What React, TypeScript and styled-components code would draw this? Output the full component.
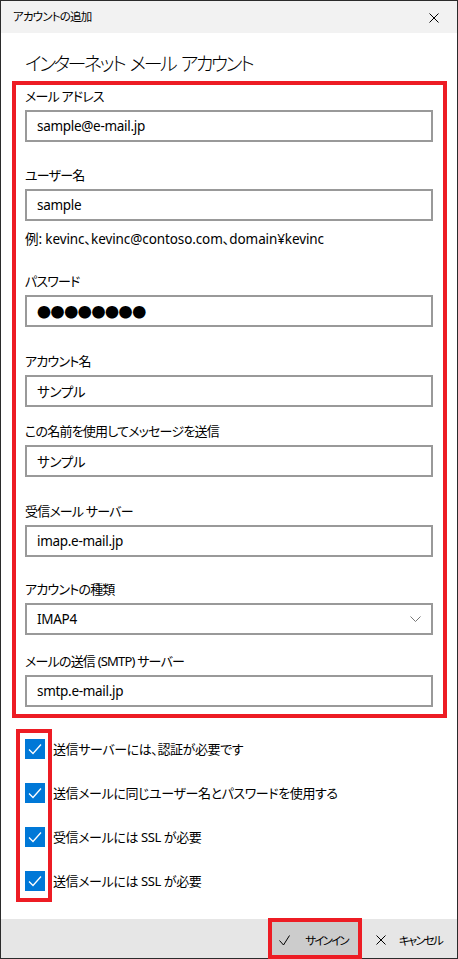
import React from "react";
import styled, { createGlobalStyle } from "styled-components";

const GlobalStyle = createGlobalStyle`
  html, body {
    margin: 0;
    padding: 0;
    background: #ffffff;
  }
  body {
    font-family: "Noto Sans", "Noto Sans CJK JP", sans-serif;
    font-feature-settings: "palt";
    color: #000000;
  }
  * {
    box-sizing: border-box;
  }
`;

const Window = styled.div`
  width: 458px;
  height: 959px;
  border: 1px solid #2b2b2b;
  background: #ffffff;
  display: flex;
  flex-direction: column;
`;

const TitleBar = styled.div`
  height: 32px;
  background: #f2f2f2;
  display: flex;
  align-items: center;
  justify-content: space-between;
  padding: 0 18px 0 12px;
`;

const TitleText = styled.span`
  font-size: 11.5px;
  line-height: 16px;
  letter-spacing: -0.8px;
`;

const CloseButton = styled.div`
  width: 10px;
  height: 10px;
  display: flex;
  margin-top: 1px;
`;

const Body = styled.div`
  flex: 1;
  padding: 0 10px 0 11px;
  display: flex;
  flex-direction: column;
`;

const Heading = styled.h1`
  margin: 17px 0 0 13px;
  font-size: 19px;
  line-height: 28px;
  font-weight: 300;
  letter-spacing: -2.5px;
  word-spacing: 3px;
`;

const FieldBox = styled.div`
  margin-top: 3px;
  border: 4px solid #ed1c24;
  padding: 1px 10px 7px 9px;
  display: flex;
  flex-direction: column;
`;

const Field = styled.div<{ $space: number }>`
  margin-top: ${(p) => p.$space}px;
  display: flex;
  flex-direction: column;
`;

const Label = styled.label`
  font-size: 13px;
  line-height: 20px;
  letter-spacing: -0.8px;
  margin-bottom: 4px;
`;

const TextBox = styled.div`
  height: 32px;
  border: 2px solid #999999;
  padding: 0 10px;
  display: flex;
  align-items: center;
  justify-content: space-between;
  font-size: 13.5px;
  letter-spacing: -0.3px;
`;

const Dots = styled.span`
  font-family: "Noto Sans CJK JP", sans-serif;
  font-size: 14px;
  letter-spacing: -0.4px;
`;

const Hint = styled.div`
  margin-top: 8px;
  font-size: 13.5px;
  line-height: 20px;
  letter-spacing: -0.1px;
`;

const CheckList = styled.div`
  position: relative;
  margin-top: 11px;
  padding: 10px 0 11px 13px;
  display: flex;
  flex-direction: column;
  gap: 24px;
`;

const Highlight = styled.div`
  position: absolute;
  left: 4px;
  top: 0;
  width: 36px;
  height: 100%;
  border: 4px solid #ed1c24;
  pointer-events: none;
`;

const CheckRow = styled.div`
  display: flex;
  align-items: center;
  gap: 8px;
  height: 20px;
`;

const CheckBox = styled.div`
  width: 20px;
  height: 20px;
  background: #0078d7;
  display: flex;
  flex-shrink: 0;
`;

const CheckText = styled.span`
  font-size: 13px;
  line-height: 20px;
  letter-spacing: -0.4px;
`;

const Footer = styled.div`
  height: 39px;
  background: #e6e6e6;
  display: flex;
  justify-content: flex-end;
  align-items: flex-end;
  padding-right: 4px;
  gap: 10px;
`;

const FooterButton = styled.div<{ $active?: boolean }>`
  position: relative;
  height: 36px;
  display: flex;
  align-items: center;
  gap: ${(p) => (p.$active ? 15 : 13)}px;
  padding: 0 11px 0 7px;
  background: ${(p) => (p.$active ? "#cccccc" : "transparent")};
  font-size: 11.5px;
  letter-spacing: -1.8px;
`;

const ButtonMark = styled.span`
  position: absolute;
  top: -4px;
  left: -4px;
  right: -3px;
  bottom: -1px;
  border: 4px solid #ed1c24;
`;

type FieldDef = {
  label: string;
  value?: string;
  space: number;
  kind?: "text" | "password" | "select";
};

const fields: FieldDef[] = [
  { label: "メール アドレス", value: "sample@e-mail.jp", space: 0 },
  { label: "ユーザー名", value: "sample", space: 23 },
  { label: "パスワード", space: 22, kind: "password" },
  { label: "アカウント名", value: "サンプル", space: 24 },
  { label: "この名前を使用してメッセージを送信", value: "サンプル", space: 14 },
  { label: "受信メール サーバー", value: "imap.e-mail.jp", space: 24 },
  { label: "アカウントの種類", value: "IMAP4", space: 22, kind: "select" },
  { label: "メールの送信 (SMTP) サーバー", value: "smtp.e-mail.jp", space: 16 },
];

const checks = [
  "送信サーバーには、認証が必要です",
  "送信メールに同じユーザー名とパスワードを使用する",
  "受信メールには SSL が必要",
  "送信メールには SSL が必要",
];

const Cross = () => (
  <svg width="10" height="10" viewBox="0 0 10 10">
    <path d="M0.5 0.5 L9.5 9.5 M9.5 0.5 L0.5 9.5" stroke="#000" strokeWidth="1" fill="none" />
  </svg>
);

const Chevron = () => (
  <svg width="11" height="6" viewBox="0 0 11 6">
    <path d="M0.5 0.5 L5.5 5.5 L10.5 0.5" stroke="#777" strokeWidth="1" fill="none" />
  </svg>
);

const Tick = () => (
  <svg width="20" height="20" viewBox="0 0 20 20">
    <path d="M4 10.5 L8 14.5 L16 5.5" stroke="#fff" strokeWidth="1.3" fill="none" />
  </svg>
);

const SignInTick = () => (
  <svg width="11" height="11" viewBox="0 0 11 11">
    <path d="M0.5 5.5 L4.5 10 L10.5 0.5" stroke="#000" strokeWidth="1" fill="none" />
  </svg>
);

export default function App() {
  return (
    <>
      <GlobalStyle />
      <Window>
        <TitleBar>
          <TitleText>アカウントの追加</TitleText>
          <CloseButton>
            <Cross />
          </CloseButton>
        </TitleBar>
        <Body>
          <Heading>インターネット メール アカウント</Heading>
          <FieldBox>
            {fields.map((f, i) => (
              <React.Fragment key={f.label}>
                <Field $space={f.space}>
                  <Label>{f.label}</Label>
                  <TextBox>
                    {f.kind === "password" ? (
                      <Dots>●●●●●●●●</Dots>
                    ) : (
                      <span>{f.value}</span>
                    )}
                    {f.kind === "select" && <Chevron />}
                  </TextBox>
                </Field>
                {i === 1 && (
                  <Hint>例: kevinc、kevinc@contoso.com、domain¥kevinc</Hint>
                )}
              </React.Fragment>
            ))}
          </FieldBox>
          <CheckList>
            <Highlight />
            {checks.map((c) => (
              <CheckRow key={c}>
                <CheckBox>
                  <Tick />
                </CheckBox>
                <CheckText>{c}</CheckText>
              </CheckRow>
            ))}
          </CheckList>
        </Body>
        <Footer>
          <FooterButton $active>
            <ButtonMark />
            <SignInTick />
            <span>サインイン</span>
          </FooterButton>
          <FooterButton>
            <Cross />
            <span>キャンセル</span>
          </FooterButton>
        </Footer>
      </Window>
    </>
  );
}
